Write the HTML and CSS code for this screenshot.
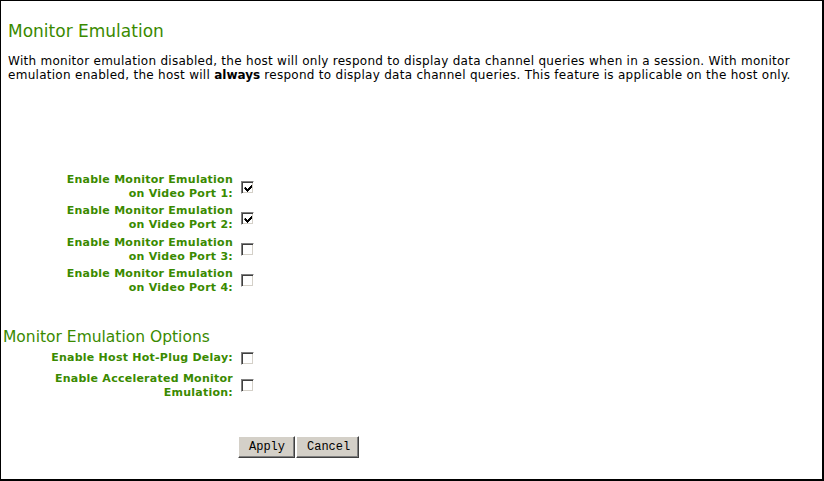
FILE: index.html
```html
<!DOCTYPE html>
<html>
<head>
<meta charset="utf-8">
<link rel="stylesheet" href="styles.css">
</head>
<body>
<div class="page">
  <h1 class="title">Monitor Emulation</h1>
  <p class="intro">With monitor emulation disabled, the host will only respond to display data channel queries when in a session. With monitor emulation enabled, the host will <b>always</b> respond to display data channel queries. This feature is applicable on the host only.</p>

  <div class="ports">
    <div class="row">
      <label class="label">Enable Monitor Emulation<br>on Video Port 1:</label>
      <span class="cb checked"><svg width="9" height="9" viewBox="0 0 9 9"><path d="M1 4h1v1h1v1h1v-1h1v-1h1v-1h1v-1h1v3h-1v1h-1v1h-1v1h-1v1h-1v-1h-1v-1h-1v-1h-1z" fill="#000"/></svg></span>
    </div>
    <div class="row">
      <label class="label">Enable Monitor Emulation<br>on Video Port 2:</label>
      <span class="cb checked"><svg width="9" height="9" viewBox="0 0 9 9"><path d="M1 4h1v1h1v1h1v-1h1v-1h1v-1h1v-1h1v3h-1v1h-1v1h-1v1h-1v1h-1v-1h-1v-1h-1v-1h-1z" fill="#000"/></svg></span>
    </div>
    <div class="row">
      <label class="label">Enable Monitor Emulation<br>on Video Port 3:</label>
      <span class="cb"></span>
    </div>
    <div class="row">
      <label class="label">Enable Monitor Emulation<br>on Video Port 4:</label>
      <span class="cb"></span>
    </div>
  </div>

  <h2 class="subtitle">Monitor Emulation Options</h2>
  <div class="options">
    <div class="row single">
      <label class="label">Enable Host Hot-Plug Delay:</label>
      <span class="cb"></span>
    </div>
    <div class="row double">
      <label class="label">Enable Accelerated Monitor<br>Emulation:</label>
      <span class="cb"></span>
    </div>
  </div>

  <div class="buttons">
    <button class="btn" type="button">Apply</button>
    <button class="btn" type="button">Cancel</button>
  </div>
</div>
</body>
</html>
```

FILE: styles.css
```css
html, body {
  margin: 0;
  padding: 0;
  background: #fff;
}

body {
  height: 481px;
  box-sizing: border-box;
  border-style: solid;
  border-color: #000;
  border-width: 1px 2px 2px 1px;
  font-family: "DejaVu Sans", Verdana, sans-serif;
  font-size: 11px;
  color: #000;
  overflow: hidden;
}

.page {
  display: flex;
  flex-direction: column;
}

.title {
  margin: 20px 0 0 0;
  padding-left: 7px;
  font-size: 17px;
  line-height: 20px;
  font-weight: normal;
  color: #3a8a00;
}

.intro {
  margin: 13px 0 0 0;
  padding-left: 7px;
  padding-right: 10px;
  font-size: 12px;
  letter-spacing: 0.28px;
  line-height: 14px;
}

.intro b {
  font-weight: bold;
  letter-spacing: 0;
}

.ports {
  margin-top: 91px;
  display: flex;
  flex-direction: column;
  gap: 3.33px;
}

.row {
  display: flex;
  align-items: center;
  gap: 8px;
}

.ports .row {
  height: 28px;
}

.label {
  width: 232px;
  text-align: right;
  font-weight: bold;
  letter-spacing: 0.25px;
  color: #3a8a00;
  line-height: 14px;
}

.cb {
  box-sizing: border-box;
  width: 13px;
  height: 13px;
  flex: none;
  background: #fff;
  border-style: solid;
  border-width: 1px;
  border-color: #808080 #fff #fff #808080;
  box-shadow: inset 1px 1px 0 #404040, inset -1px -1px 0 #d4d0c8;
  display: flex;
  align-items: center;
  justify-content: center;
}

.cb svg {
  display: block;
  margin: 1px 0 0 1px;
}

.subtitle {
  margin: 34px 0 0 0;
  padding-left: 2px;
  font-size: 15.5px;
  line-height: 17px;
  font-weight: normal;
  color: #3a8a00;
}

.options {
  margin-top: 2px;
  display: flex;
  flex-direction: column;
  gap: 2px;
}

.options .single {
  height: 21px;
}

.options .double {
  height: 30px;
}

.buttons {
  margin-top: 35px;
  padding-left: 237px;
  display: flex;
  gap: 1px;
}

.btn {
  box-sizing: border-box;
  height: 22px;
  margin: 0;
  padding: 0 10px;
  font-family: "Liberation Mono", "Courier New", monospace;
  font-size: 12px;
  color: #000;
  background: #d4d0c8;
  border-style: solid;
  border-width: 1px;
  border-color: #fff #404040 #404040 #fff;
  box-shadow: inset -1px -1px 0 #808080, inset 1px 1px 0 #d4d0c8;
}

.btn:first-child {
  width: 57px;
}

.btn:last-child {
  width: 63px;
}
```
